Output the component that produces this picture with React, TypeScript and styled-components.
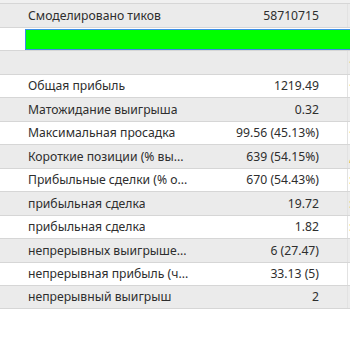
import styled, { createGlobalStyle } from "styled-components";

const GlobalStyle = createGlobalStyle`
  html, body {
    margin: 0;
    padding: 0;
    background: #ffffff;
    overflow: hidden;
  }
  body {
    font-family: "Noto Sans", "Open Sans", sans-serif;
    font-size: 12.2px;
    color: #2e2e2e;
  }
`;

const Report = styled.div`
  width: 440px;
  padding-top: 3px;
  background: #ffffff;
  box-shadow: inset 0 3px 0 #f0f0f0;
`;

const Row = styled.div<{ $shade: boolean }>`
  display: grid;
  grid-template-columns: 208px 139px 1px 1fr;
  height: 23.5px;
  box-sizing: border-box;
  border-top: 1px solid #d6d6d6;
  background: ${(p) => (p.$shade ? "#ebebeb" : "#ffffff")};
  overflow: hidden;

  &:last-child {
    border-bottom: 1px solid #d6d6d6;
  }
`;

const Label = styled.div`
  padding-left: 28px;
  display: flex;
  align-items: center;
  min-width: 0;
  white-space: nowrap;
  overflow: hidden;

  span {
    display: block;
    min-width: 0;
    overflow: hidden;
    text-overflow: ellipsis;
  }
`;

const Value = styled.div`
  padding-right: 28px;
  display: flex;
  align-items: center;
  justify-content: flex-end;
  white-space: nowrap;
`;

const Divider = styled.div`
  background: #e2e2e2;
`;

const Next = styled.div`
  padding-left: 1px;
  display: flex;
  align-items: center;
  white-space: nowrap;
  color: #d98b2b;
`;

const ProgressRow = styled.div`
  height: 23.5px;
  box-sizing: border-box;
  border-top: 1px solid #d6d6d6;
  background: #ffffff;
  padding: 1px 0 0 25px;
`;

const Bar = styled.div`
  height: 21px;
  box-sizing: border-box;
  border: 1px solid #3c8ee6;
  background: #00ff00;
`;

type Item = { label: string; value: string; next: string };

const items: Item[] = [
  { label: "", value: "", next: "·" },
  { label: "Общая прибыль", value: "1219.49", next: "·" },
  { label: "Матожидание выигрыша", value: "0.32", next: "" },
  { label: "Максимальная просадка", value: "99.56 (45.13%)", next: "·" },
  { label: "Короткие позиции (% вы...", value: "639 (54.15%)", next: "," },
  { label: "Прибыльные сделки (% о...", value: "670 (54.43%)", next: ":" },
  { label: "прибыльная сделка", value: "19.72", next: ":" },
  { label: "прибыльная сделка", value: "1.82", next: ":" },
  { label: "непрерывных выигрыше...", value: "6 (27.47)", next: "" },
  { label: "непрерывная прибыль (ч...", value: "33.13 (5)", next: "" },
  { label: "непрерывный выигрыш", value: "2", next: "" },
];

export default function App() {
  return (
    <>
      <GlobalStyle />
      <Report>
        <Row $shade>
          <Label>
            <span>Смоделировано тиков</span>
          </Label>
          <Value>58710715</Value>
          <Divider />
          <Next />
        </Row>
        <ProgressRow>
          <Bar />
        </ProgressRow>
        {items.map((it, i) => (
          <Row key={i} $shade={i % 2 === 0}>
            <Label>
              <span>{it.label}</span>
            </Label>
            <Value>{it.value}</Value>
            <Divider />
            <Next>{it.next}</Next>
          </Row>
        ))}
      </Report>
    </>
  );
}
